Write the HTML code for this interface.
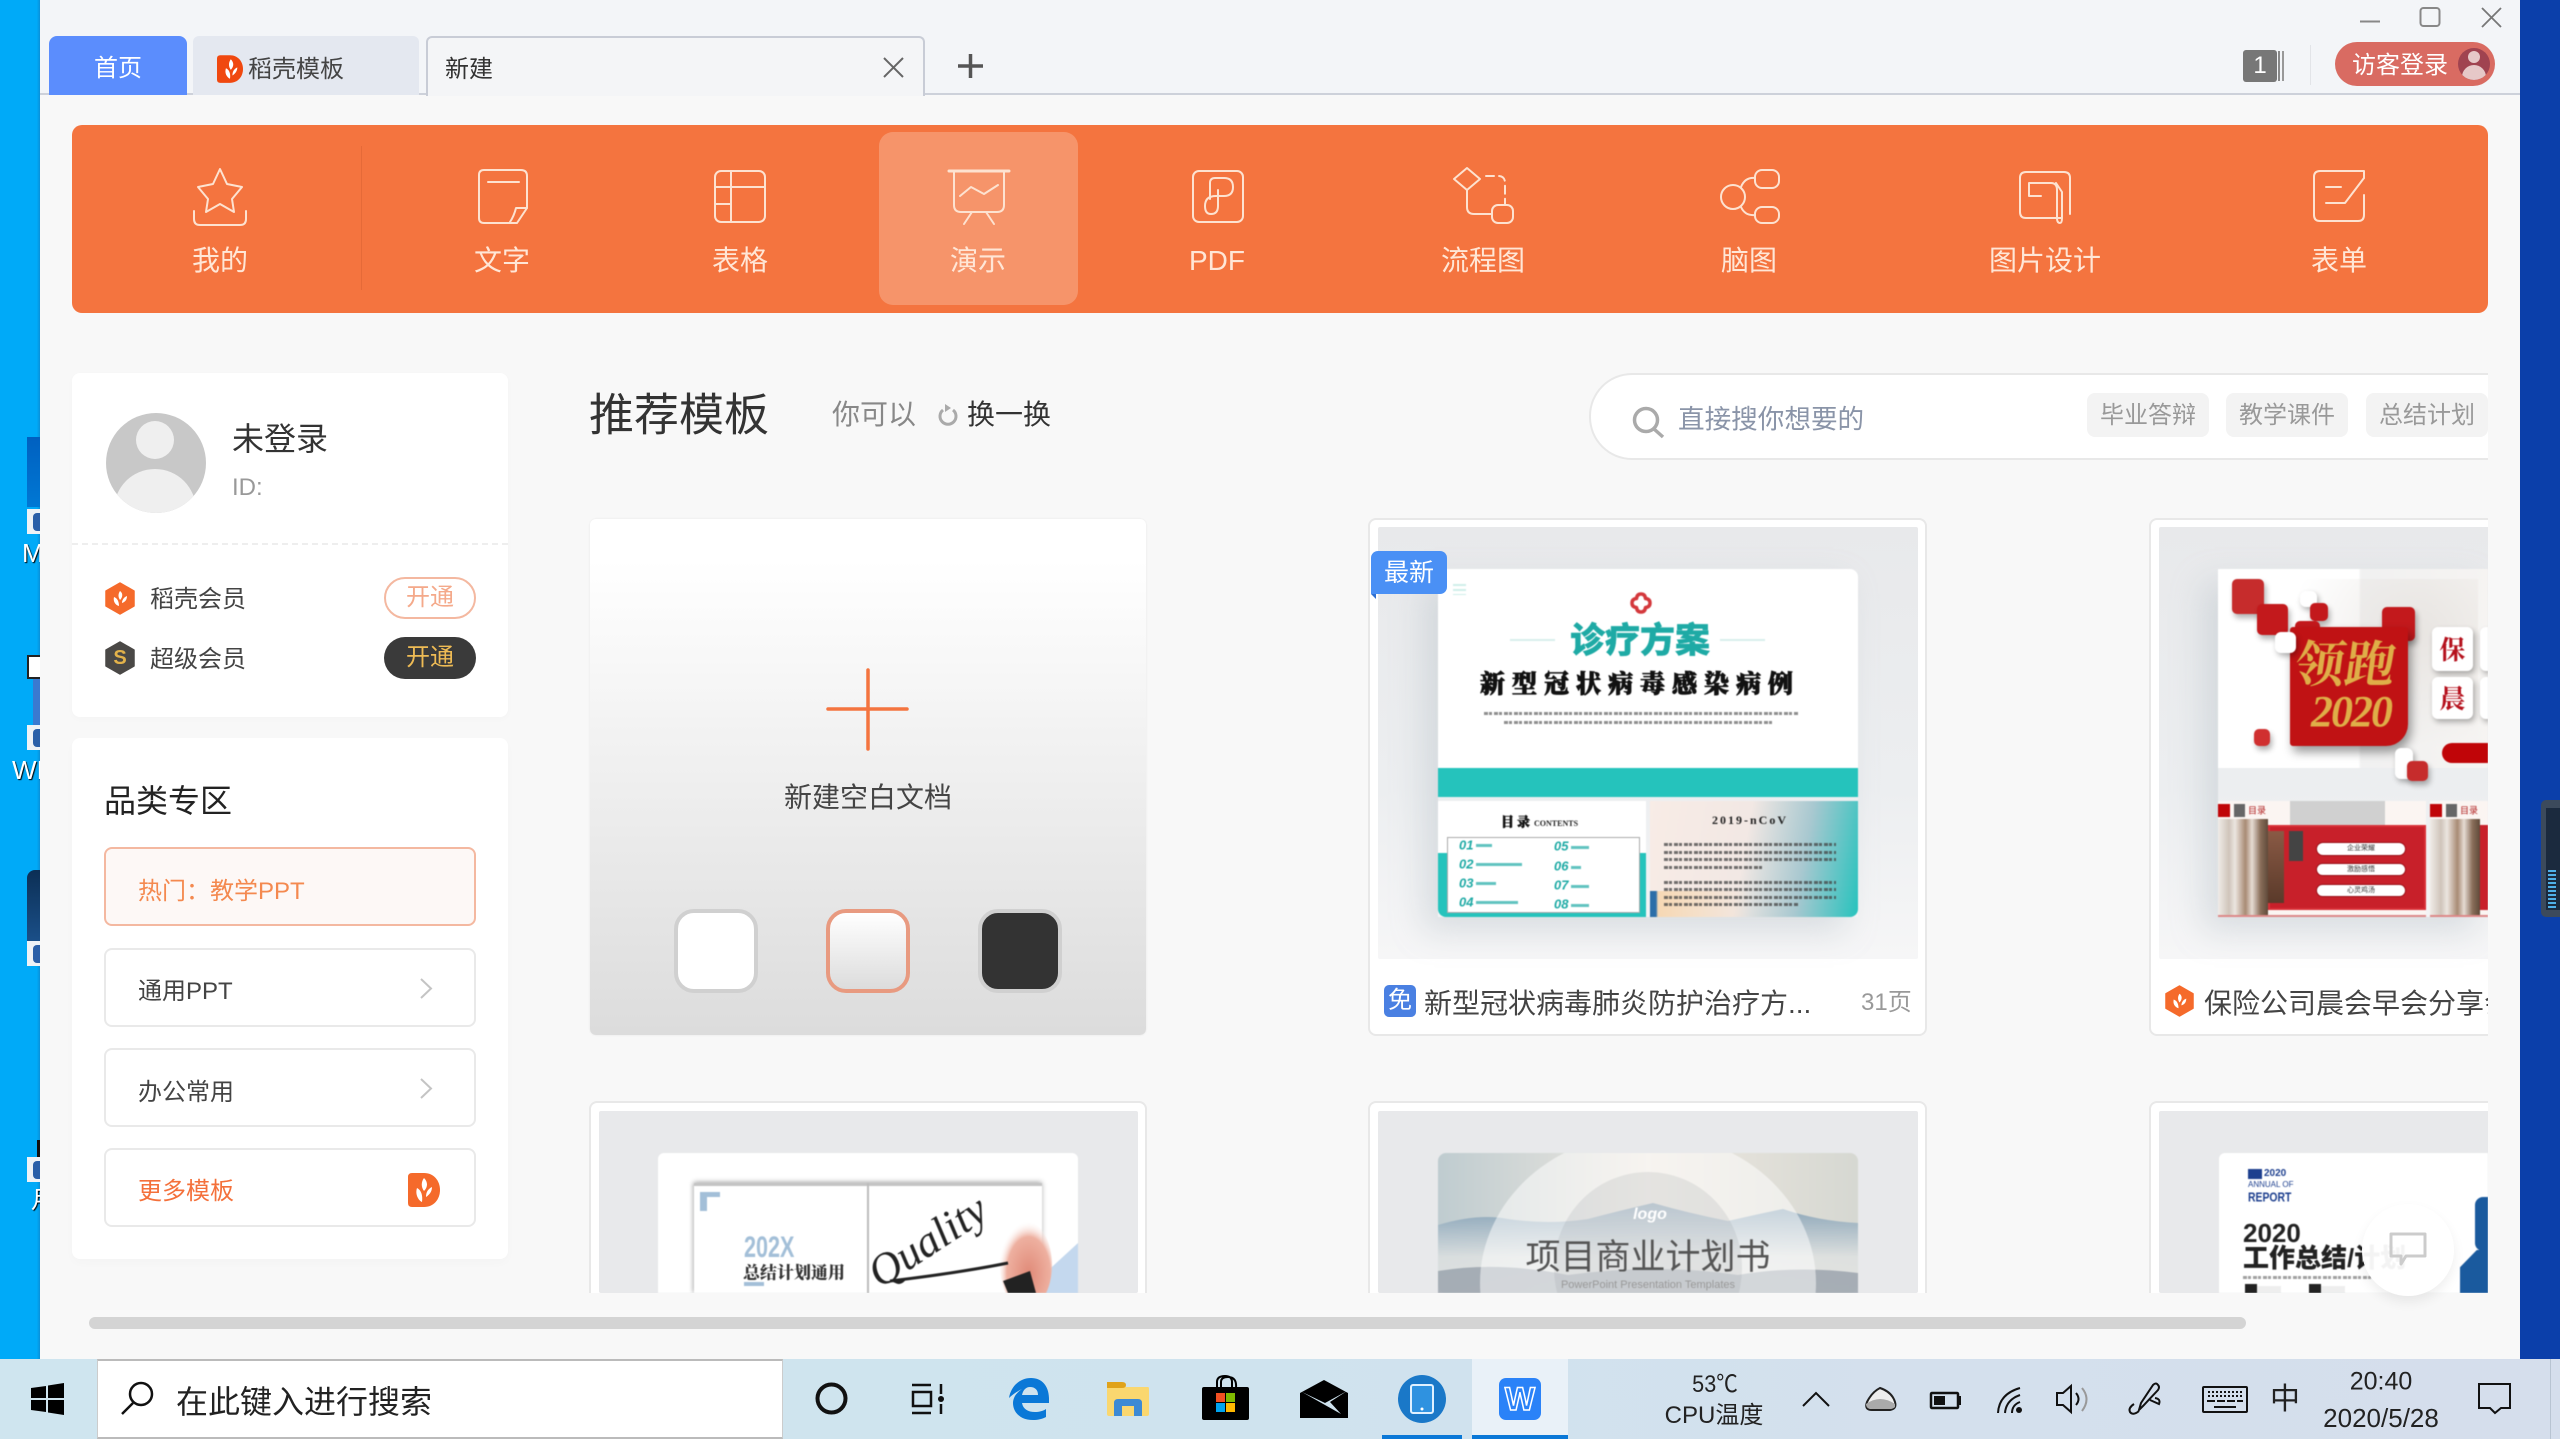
<!DOCTYPE html>
<html lang="zh"><head><meta charset="utf-8"><title>WPS</title>
<style>
*{margin:0;padding:0;box-sizing:border-box}
html,body{width:2560px;height:1439px;overflow:hidden;background:#0b3faa}
body{position:relative;font-family:"Liberation Sans","Noto Sans CJK SC",sans-serif;color:#333}
.a{position:absolute}
.t{position:absolute;white-space:nowrap;line-height:1;transform:translateY(-50%)}
.c{position:absolute;white-space:nowrap;line-height:1;transform:translate(-50%,-50%)}
.nav{font-size:28px;color:#ffe6d6;top:261px}
.box{position:absolute;left:104px;width:372px;height:79px;border:2px solid #e9e9e9;border-radius:8px;background:#fff}
.card{position:absolute;background:#fff;border:2px solid #e8e8e8;border-radius:8px;height:518px;width:559px}
.card.r2{height:192px;border-bottom:0;border-radius:8px 8px 0 0}
.inner{position:absolute;left:8px;top:7px;right:7px;height:432px;background:linear-gradient(#e8e9eb 0,#eceef0 60%,#f6f6f7 100%);border-radius:2px}
.r2 .inner{top:8px;height:182px;background:#e8e9eb}
.tag{position:absolute;top:33px;width:122px;height:44px;background:#f3f3f3;border-radius:8px;color:#999;font-size:24px;line-height:46px;text-align:center}
.red{position:absolute;background:#c3191c;border-radius:5px;box-shadow:2px 4px 6px rgba(0,0,0,.3)}
.wh{position:absolute;background:#fff;border-radius:6px;box-shadow:2px 3px 6px rgba(0,0,0,.3)}
.ln{position:absolute;height:3px;background:repeating-linear-gradient(90deg,#444 0 4px,transparent 4px 5px,#444 5px 8px,transparent 8px 10px)}
</style></head><body>

<!-- desktop left -->
<div class="a" style="left:0;top:0;width:40px;height:1439px;background:linear-gradient(90deg,#00aaf8 0,#00aaf8 92%,#0a8fd8 100%)"></div>
<div class="a" style="left:27px;top:437px;width:13px;height:70px;background:linear-gradient(#0060c0,#0078d4)"></div>
<div class="a" style="left:27px;top:509px;width:13px;height:25px;background:#eef2f6"></div>
<div class="a" style="left:33px;top:513px;width:7px;height:18px;background:#2a5fa8;border-radius:4px 0 0 4px"></div>
<div class="t" style="left:22px;top:553px;width:18px;overflow:hidden;font-size:26px;color:#fff;text-shadow:1px 1px 1px #000">M</div>
<div class="a" style="left:27px;top:655px;width:13px;height:24px;background:#fff;border:2px solid #222;border-right:0"></div>
<div class="a" style="left:33px;top:679px;width:7px;height:46px;background:#3a7ad0"></div>
<div class="a" style="left:27px;top:725px;width:13px;height:25px;background:#eef2f6"></div>
<div class="a" style="left:33px;top:729px;width:7px;height:18px;background:#2a5fa8;border-radius:4px 0 0 4px"></div>
<div class="t" style="left:12px;top:770px;width:28px;overflow:hidden;font-size:26px;color:#fff;text-shadow:1px 1px 1px #000">WI</div>
<div class="a" style="left:27px;top:870px;width:13px;height:71px;background:linear-gradient(#0c2f55,#1a4f88);border-radius:8px 0 0 0"></div>
<div class="a" style="left:27px;top:941px;width:13px;height:25px;background:#eef2f6"></div>
<div class="a" style="left:33px;top:945px;width:7px;height:18px;background:#2a5fa8;border-radius:4px 0 0 4px"></div>
<div class="a" style="left:37px;top:1140px;width:3px;height:17px;background:#111"></div>
<div class="a" style="left:27px;top:1157px;width:13px;height:25px;background:#eef2f6"></div>
<div class="a" style="left:33px;top:1161px;width:7px;height:18px;background:#2a5fa8;border-radius:4px 0 0 4px"></div>
<div class="t" style="left:31px;top:1201px;width:9px;overflow:hidden;font-size:24px;color:#fff;text-shadow:1px 1px 1px #000">月</div>

<!-- desktop right gadget -->
<div class="a" style="left:2541px;top:800px;width:19px;height:117px;background:#3c4a5c;border-radius:5px 0 0 5px"></div>
<div class="a" style="left:2546px;top:808px;width:14px;height:102px;background:#1b2a3e"></div>
<div class="a" style="left:2548px;top:870px;width:8px;height:38px;background:repeating-linear-gradient(#4fb0e8 0 2px,#1b2a3e 2px 4px)"></div>

<!-- window -->
<div class="a" style="left:40px;top:0;width:2480px;height:1359px;background:#f8f8f8"></div>
<div class="a" style="left:40px;top:0;width:2480px;height:95px;background:#f3f5f8;border-bottom:2px solid #cdd1da"></div>

<!-- tabs -->
<div class="a" style="left:49px;top:36px;width:138px;height:59px;background:#5b8dfd;border-radius:8px 8px 0 0"></div>
<div class="c" style="left:118px;top:69px;font-size:24px;color:#fff">首页</div>
<div class="a" style="left:193px;top:36px;width:226px;height:59px;background:#e4e8f0;border-radius:6px 6px 0 0"></div>
<svg class="a" style="left:217px;top:54px" width="26" height="30" viewBox="0 0 32 34"><path d="M4 0H16C26 0 32 8 32 17C32 26 26 34 16 34H4Q0 34 0 30V4Q0 0 4 0Z" fill="#f0480f"/><path d="M17 5C21 9 21 14 17 18C14 14 14 9 17 5ZM11 16C15 18 17 22 16 29C12 27 9 22 11 16ZM25 15C25 20 22 23 19 25C19 20 21 17 25 15Z" fill="#fff"/></svg>
<div class="t" style="left:248px;top:70px;font-size:24px;color:#444">稻壳模板</div>
<div class="a" style="left:426px;top:36px;width:499px;height:60px;background:#f4f5f7;border:2px solid #c8ccd6;border-bottom:0;border-radius:6px 6px 0 0"></div>
<div class="t" style="left:445px;top:70px;font-size:24px;color:#333">新建</div>

<!-- top right -->
<div class="a" style="left:2243px;top:50px;width:34px;height:32px;background:#777;border-radius:3px;color:#fff;font-size:24px;line-height:32px;text-align:center">1</div>
<div class="a" style="left:2278px;top:51px;width:1.5px;height:30px;background:#888"></div>
<div class="a" style="left:2282px;top:51px;width:1.5px;height:30px;background:#999"></div>
<div class="a" style="left:2310px;top:45px;width:1px;height:40px;background:#e2e4e8"></div>
<div class="a" style="left:2335px;top:42px;width:160px;height:44px;background:#d96b62;border-radius:22px"></div>
<div class="t" style="left:2352px;top:66px;font-size:24px;color:#fff">访客登录</div>
<div class="a" style="left:2458px;top:48px;width:32px;height:32px;background:#a04350;border-radius:50%;overflow:hidden">
  <div class="a" style="left:10px;top:3px;width:12px;height:12px;background:#e6c8c8;border-radius:50%"></div>
  <div class="a" style="left:4px;top:17px;width:24px;height:15px;background:#e6c8c8;border-radius:12px 12px 0 0"></div>
</div>

<!-- orange bar -->
<div class="a" style="left:72px;top:125px;width:2416px;height:188px;background:#f4743f;border-radius:10px"></div>
<div class="a" style="left:361px;top:146px;width:1px;height:144px;background:#e56a38"></div>
<div class="a" style="left:879px;top:132px;width:199px;height:173px;background:#f6946a;border-radius:14px"></div>
<div class="c nav" style="left:220px">我的</div>
<div class="c nav" style="left:502px">文字</div>
<div class="c nav" style="left:740px">表格</div>
<div class="c nav" style="left:978px">演示</div>
<div class="c nav" style="left:1217px">PDF</div>
<div class="c nav" style="left:1483px">流程图</div>
<div class="c nav" style="left:1749px">脑图</div>
<div class="c nav" style="left:2045px">图片设计</div>
<div class="c nav" style="left:2339px">表单</div>

<!-- page vector icons -->
<svg class="a" style="left:0;top:0;z-index:3;pointer-events:none" width="2560" height="1439" viewBox="0 0 2560 1439" fill="none">
 <!-- window ctrls -->
 <path d="M2360 21.5H2380" stroke="#888" stroke-width="2"/>
 <rect x="2420.5" y="8" width="19" height="18" rx="3" stroke="#888" stroke-width="2"/>
 <path d="M2482 8L2501 27M2501 8L2482 27" stroke="#777" stroke-width="1.8"/>
 <path d="M884 58L903 77M903 58L884 77" stroke="#666" stroke-width="2"/>
 <path d="M970.5 54V78M958 66H983" stroke="#555" stroke-width="3.5"/>
 <g stroke="#fde2d0" stroke-width="2" stroke-linejoin="round" stroke-linecap="round">
  <path d="M220 169L227 184L242 187L232 199L234 212L220 204L206 212L208 199L198 187L213 184Z"/>
  <path d="M194 211V219Q194 225 200 225H240Q246 225 246 219V211"/>
  <path d="M484 170H521Q527 170 527 176V208L517 223H484Q479 223 479 218V175Q479 170 484 170Z"/>
  <path d="M527 208H516Q514 216 510 222M488 182H519"/>
  <rect x="715" y="171" width="50" height="51" rx="6"/>
  <path d="M715 187H765M731 171V222M715 204H731"/>
  <path d="M949 171H1009" stroke-width="3"/>
  <path d="M954 171V205Q954 212 961 212H997Q1004 212 1004 205V171M972 212L964 224M986 212L994 224M960 196L971 187L984 194L998 185"/>
  <rect x="1193" y="171" width="50" height="51" rx="6"/>
  <path d="M1210 199V183Q1210 178 1215 178H1224Q1233 178 1233 187Q1233 196 1224 196H1216Q1205 196 1205 206Q1205 214 1211 214Q1218 214 1218 206V190"/>
  <path d="M1467 168L1480 179L1467 190L1454 179Z"/>
  <path d="M1486 176H1498Q1505 176 1505 183V205" stroke-dasharray="8 5"/>
  <path d="M1467 190V207Q1467 214 1474 214H1492"/>
  <rect x="1492" y="205" width="21" height="18" rx="6"/>
  <ellipse cx="1733" cy="197" rx="12" ry="12"/>
  <rect x="1755" y="170" width="24" height="18" rx="7"/>
  <rect x="1755" y="207" width="24" height="16" rx="7"/>
  <path d="M1741 187Q1745 177 1755 178M1741 207Q1745 216 1755 215"/>
  <path d="M2062 218H2026Q2020 218 2020 212V178Q2020 172 2026 172H2064Q2070 172 2070 178V214"/>
  <path d="M2041 196H2029V183H2051Q2057 183 2057 190V218Q2057 223 2060 223Q2062 223 2062 218V192L2056 183"/>
  <path d="M2364 178V171H2320Q2314 171 2314 177V215Q2314 221 2320 221H2358Q2364 221 2364 215V195"/>
  <path d="M2364 178L2345 203H2326M2326 187H2341"/>
 </g>
 <!-- refresh -->
 <path d="M943 410A8 8 0 1 0 953 410" stroke="#aaa" stroke-width="3"/><path d="M945 404L951 408L945 412Z" fill="#aaa"/>
 <!-- new plus -->
 <path d="M868 670V749M828 709H907" stroke="#f4743f" stroke-width="3.5" stroke-linecap="round"/>
 <!-- chevrons -->
 <path d="M421 979L431 988.5L421 998" stroke="#c4c4c4" stroke-width="2"/>
 <path d="M421 1079L431 1088.5L421 1098" stroke="#c4c4c4" stroke-width="2"/>
 <!-- more logo -->
 <g transform="translate(408 1173)"><path d="M4 0H16C26 0 32 8 32 17C32 26 26 34 16 34H4Q0 34 0 30V4Q0 0 4 0Z" fill="#f56a2b"/><path d="M16 5C20 9 20 14 16 18C13 14 13 9 16 5ZM9 15C13 17 15 22 14 29C10 27 7 21 9 15ZM24 14C24 19 21 22 18 24C18 19 20 16 24 14Z" fill="#fff"/></g>
 <!-- member hexes -->
 <g transform="translate(105 582)"><path d="M15 1L29 9V24L15 32L1 24V9Z" fill="#f56a2b" stroke="#f56a2b" stroke-width="1.5" stroke-linejoin="round"/><path d="M15 9C18 11 18 15 15 18C13 15 13 12 15 9ZM9 15C12 16 14 19 14 24C10 23 8 19 9 15ZM22 14C22 18 20 20 17 21C17 18 19 15 22 14Z" fill="#fff"/></g>
 <path d="M120 642L134 650V666L120 674L106 666V650Z" fill="#4a4846" stroke="#4a4846" stroke-width="1.5" stroke-linejoin="round"/>
 <!-- search magnifier main -->
 <circle cx="1646" cy="420" r="11.5" stroke="#aaa" stroke-width="3.5"/><path d="M1654 429L1663 437" stroke="#aaa" stroke-width="3.5"/>
</svg>
<div class="c" style="left:120px;top:658px;font-size:20px;font-weight:700;color:#e3b24a;z-index:4">S</div>

<!-- left profile card -->
<div class="a" style="left:72px;top:373px;width:436px;height:344px;background:#fff;border-radius:8px;box-shadow:0 2px 8px rgba(0,0,0,.02)"></div>
<div class="a" style="left:106px;top:413px;width:100px;height:100px;background:#c8c8c8;border-radius:50%;overflow:hidden">
 <div class="a" style="left:30px;top:8px;width:38px;height:38px;background:#efefef;border-radius:50%"></div>
 <div class="a" style="left:8px;top:56px;width:82px;height:44px;background:#efefef;border-radius:41px 41px 0 0"></div>
</div>
<div class="t" style="left:232px;top:439px;font-size:32px;color:#333">未登录</div>
<div class="t" style="left:232px;top:488px;font-size:24px;color:#999">ID:</div>
<div class="a" style="left:72px;top:543px;width:436px;border-top:2px dashed #eee"></div>
<div class="t" style="left:150px;top:600px;font-size:24px;color:#444">稻壳会员</div>
<div class="t" style="left:150px;top:660px;font-size:24px;color:#444">超级会员</div>
<div class="a" style="left:384px;top:577px;width:92px;height:42px;border:2px solid #f4b8a0;border-radius:21px;background:#fff;color:#f4a98a;font-size:24px;line-height:38px;text-align:center">开通</div>
<div class="a" style="left:384px;top:637px;width:92px;height:42px;border-radius:21px;background:#3a3a3a;color:#eebb55;font-size:24px;line-height:42px;text-align:center">开通</div>

<!-- left category card -->
<div class="a" style="left:72px;top:738px;width:436px;height:521px;background:#fff;border-radius:8px;box-shadow:0 4px 10px rgba(0,0,0,.02)"></div>
<div class="t" style="left:104px;top:801px;font-size:32px;color:#222">品类专区</div>
<div class="box" style="top:847px;border-color:#f4b8a0;background:#fdf8f6"></div>
<div class="t" style="left:138px;top:892px;font-size:24px;color:#f4894f">热门：教学PPT</div>
<div class="box" style="top:948px"></div>
<div class="t" style="left:138px;top:992px;font-size:24px;color:#444">通用PPT</div>
<div class="box" style="top:1048px"></div>
<div class="t" style="left:138px;top:1093px;font-size:24px;color:#444">办公常用</div>
<div class="box" style="top:1148px"></div>
<div class="t" style="left:138px;top:1192px;font-size:24px;color:#f4703a">更多模板</div>

<!-- main heading -->
<div class="t" style="left:589px;top:415px;font-size:45px;color:#333">推荐模板</div>
<div class="t" style="left:832px;top:415px;font-size:28px;color:#888">你可以</div>
<div class="t" style="left:967px;top:415px;font-size:28px;color:#333">换一换</div>

<!-- search -->
<div class="a" style="left:1589px;top:373px;width:899px;height:87px;overflow:hidden">
 <div class="a" style="left:0;top:0;width:899px;height:87px;background:#fff;border:2px solid #e8e8e8;border-right:0;border-radius:43px 0 0 43px"></div>
 <div class="t" style="left:89px;top:47px;font-size:26.6px;color:#8a94a8">直接搜你想要的</div>
 <div class="tag" style="left:498px;top:20px">毕业答辩</div>
 <div class="tag" style="left:637px;top:20px">教学课件</div>
 <div class="tag" style="left:777px;top:20px">总结计划</div>
</div>

<!-- scroll clip -->
<div class="a" style="left:560px;top:500px;width:1928px;height:793px;overflow:hidden">
 <!-- new blank -->
 <div class="a" style="left:30px;top:19px;width:556px;height:516px;border-radius:6px;background:linear-gradient(#fff 0,#fff 8%,#dcdcdc 100%);box-shadow:0 0 2px rgba(0,0,0,.08)"></div>
 <div class="c" style="left:308px;top:298px;font-size:28px;color:#444">新建空白文档</div>
 <div class="a" style="left:114px;top:409px;width:84px;height:84px;background:#fff;border:4px solid #d0d0d0;border-radius:20px"></div>
 <div class="a" style="left:266px;top:409px;width:84px;height:84px;background:linear-gradient(#fff,#dcdcdc);border:4px solid #e89a80;border-radius:20px"></div>
 <div class="a" style="left:418px;top:409px;width:84px;height:84px;background:#333;border:4px solid #d0d0d0;border-radius:20px"></div>

 <!-- card 2 -->
 <div class="card" style="left:808px;top:18px"><div class="inner"></div></div>
 <div class="a" style="left:878px;top:69px;width:420px;height:348px;filter:blur(.6px);box-shadow:-14px 14px 30px rgba(170,180,190,.35)">
  <div class="a" style="left:0;top:0;width:420px;height:199px;background:#fff;border-radius:8px 8px 0 0"></div>
  <div class="a" style="left:0;top:199px;width:420px;height:29px;background:#25c3bc"></div>
  <div class="a" style="left:15px;top:15px;width:13px;height:11px;background:repeating-linear-gradient(#cfeeea 0 2px,transparent 2px 5px)"></div>
  <svg class="a" style="left:192px;top:23px" width="22" height="22" viewBox="0 0 22 22" fill="none"><path d="M11 2Q15 2 15.500 6.500Q20 7 20 11Q20 15 15.500 15.500Q15 20 11 20Q7 20 6.500 15.500Q2 15 2 11Q2 7 6.500 6.500Q7 2 11 2Z" stroke="#d4383c" stroke-width="3.5" stroke-linejoin="round"/></svg>
  <div class="c" style="left:202px;top:72px;font-size:35px;font-weight:900;color:#1eaaa5;-webkit-text-stroke:.4px #1eaaa5">诊疗方案</div>
  <div class="a" style="left:72px;top:70px;width:45px;height:2px;background:#d8eeec"></div>
  <div class="a" style="left:282px;top:70px;width:45px;height:2px;background:#d8eeec"></div>
  <div class="c" style="left:202px;top:114px;font-size:25px;font-weight:900;color:#111;letter-spacing:7px;-webkit-text-stroke:.8px #111;font-family:'Noto Serif CJK SC',serif">新型冠状病毒感染病例</div>
  <div class="ln" style="left:46px;top:143px;width:314px;opacity:.6"></div>
  <div class="ln" style="left:66px;top:152px;width:270px;opacity:.6"></div>
  <!-- lower left -->
  <div class="a" style="left:0;top:232px;width:208px;height:116px;background:#fff;overflow:hidden;border-radius:0 0 0 8px">
   <div class="a" style="left:0;top:52px;width:208px;height:64px;background:#25c3bc"></div>
   <div class="a" style="left:9px;top:36px;width:193px;height:76px;background:#fff;border:1px solid #aaa"></div>
   <div class="t" style="left:63px;top:20px;font-size:13px;letter-spacing:3px;font-weight:900;color:#111;-webkit-text-stroke:.5px #111;font-family:'Noto Serif CJK SC',serif">目录</div>
   <div class="t" style="left:96px;top:23px;font-size:8px;font-weight:700;color:#222;font-family:'Liberation Serif',serif">CONTENTS</div>
   <div class="t" style="left:21px;top:44px;font-size:13px;font-weight:700;font-style:italic;color:#1eaaa5">01</div>
   <div class="t" style="left:21px;top:63px;font-size:13px;font-weight:700;font-style:italic;color:#1eaaa5">02</div>
   <div class="t" style="left:21px;top:82px;font-size:13px;font-weight:700;font-style:italic;color:#1eaaa5">03</div>
   <div class="t" style="left:21px;top:101px;font-size:13px;font-weight:700;font-style:italic;color:#1eaaa5">04</div>
   <div class="t" style="left:116px;top:45px;font-size:13px;font-weight:700;font-style:italic;color:#1eaaa5">05</div>
   <div class="t" style="left:116px;top:65px;font-size:13px;font-weight:700;font-style:italic;color:#1eaaa5">06</div>
   <div class="t" style="left:116px;top:84px;font-size:13px;font-weight:700;font-style:italic;color:#1eaaa5">07</div>
   <div class="t" style="left:116px;top:103px;font-size:13px;font-weight:700;font-style:italic;color:#1eaaa5">08</div>
   <div class="ln" style="left:38px;top:43px;width:16px;background:#1eaaa5;opacity:.7"></div>
   <div class="ln" style="left:38px;top:62px;width:46px;background:#1eaaa5;opacity:.7"></div>
   <div class="ln" style="left:38px;top:81px;width:20px;background:#1eaaa5;opacity:.7"></div>
   <div class="ln" style="left:38px;top:100px;width:42px;background:#1eaaa5;opacity:.7"></div>
   <div class="ln" style="left:133px;top:45px;width:18px;background:#1eaaa5;opacity:.7"></div>
   <div class="ln" style="left:133px;top:65px;width:10px;background:#1eaaa5;opacity:.7"></div>
   <div class="ln" style="left:133px;top:84px;width:18px;background:#1eaaa5;opacity:.7"></div>
   <div class="ln" style="left:133px;top:103px;width:18px;background:#1eaaa5;opacity:.7"></div>
  </div>
  <!-- lower right -->
  <div class="a" style="left:212px;top:232px;width:208px;height:116px;background:linear-gradient(100deg,#f8ece6 0,#f2e8e4 45%,#a8c8d0 72%,#27c3bd 100%);overflow:hidden;border-radius:0 0 8px 0">
   <div class="a" style="left:0;top:90px;width:100px;height:26px;background:linear-gradient(90deg,#2c6ea8 0,#2c6ea8 6%,#f6d8b4 8%,transparent 100%)"></div>
   <div class="c" style="left:100px;top:19px;font-size:12px;font-weight:900;color:#222;letter-spacing:2px;font-family:'Liberation Serif',serif">2019-nCoV</div>
   <div class="ln" style="left:14px;top:42px;width:172px;opacity:.75"></div>
   <div class="ln" style="left:14px;top:50px;width:172px;opacity:.75"></div>
   <div class="ln" style="left:14px;top:57px;width:172px;opacity:.75"></div>
   <div class="ln" style="left:14px;top:65px;width:100px;opacity:.75"></div>
   <div class="ln" style="left:14px;top:80px;width:172px;opacity:.75"></div>
   <div class="ln" style="left:14px;top:87px;width:172px;opacity:.75"></div>
   <div class="ln" style="left:14px;top:95px;width:172px;opacity:.75"></div>
   <div class="ln" style="left:14px;top:102px;width:135px;opacity:.75"></div>
  </div>
 </div>
 <!-- badge -->
 <div class="a" style="left:811px;top:51px;width:76px;height:43px;background:#4a90f5;border-radius:7px 7px 7px 0;color:#fff;font-size:25px;line-height:44px;text-align:center">最新</div>
 <div class="a" style="left:811px;top:94px;width:0;height:0;border-top:5px solid #2f6fd0;border-left:5px solid transparent"></div>
 <div class="a" style="left:824px;top:485px;width:32px;height:32px;background:#4a80e2;border-radius:5px;color:#fff;font-size:24px;line-height:32px;text-align:center">免</div>
 <div class="t" style="left:864px;top:504px;font-size:28px;color:#444">新型冠状病毒肺炎防护治疗方...</div>
 <div class="t" style="left:1301px;top:503px;font-size:24px;color:#999">31页</div>

 <!-- card 3 -->
 <div class="card" style="left:1589px;top:18px;width:360px"><div class="inner"></div></div>
 <div class="a" style="left:1658px;top:69px;width:270px;height:348px;filter:blur(.5px);box-shadow:-14px 14px 30px rgba(170,180,190,.35);overflow:hidden">
  <div class="a" style="left:0;top:0;width:270px;height:199px;background:linear-gradient(90deg,#fff 0,#fff 52%,#f1f1f1 53%,#f6f4f2 100%)"></div>
  <div class="a" style="left:60px;top:10px;width:200px;height:180px;background:radial-gradient(ellipse at 70% 30%,rgba(225,220,215,.6),transparent 65%)"></div>
  <div class="red" style="left:14px;top:10px;width:32px;height:35px;background:#c62c2c"></div>
  <div class="red" style="left:39px;top:35px;width:31px;height:31px"></div>
  <div class="wh" style="left:82px;top:22px;width:17px;height:16px"></div>
  <div class="red" style="left:92px;top:34px;width:18px;height:18px"></div>
  <div class="red" style="left:77px;top:52px;width:25px;height:14px"></div>
  <div class="red" style="left:164px;top:38px;width:33px;height:34px"></div>
  <div class="a" style="left:72px;top:58px;width:118px;height:119px;background:#c01214;border-radius:3px 3px 22px 3px;box-shadow:3px 6px 10px rgba(0,0,0,.4)"></div>
  <div class="wh" style="left:57px;top:63px;width:21px;height:21px"></div>
  <div class="c" style="left:128px;top:92px;font-size:50px;font-weight:700;color:#dfae48;font-family:'Noto Serif CJK SC',serif;transform:translate(-50%,-50%) skewX(-8deg)">领跑</div>
  <div class="c" style="left:133px;top:143px;font-size:44px;font-weight:700;font-style:italic;color:#dfae48;font-family:'Liberation Serif',serif;letter-spacing:-2px">2020</div>
  <div class="wh" style="left:214px;top:58px;width:41px;height:44px;color:#b5101c;font-size:26px;font-weight:700;line-height:44px;text-align:center;font-family:'Noto Serif CJK SC',serif">保</div>
  <div class="wh" style="left:214px;top:108px;width:41px;height:42px;color:#b5101c;font-size:26px;font-weight:700;line-height:42px;text-align:center;font-family:'Noto Serif CJK SC',serif">晨</div>
  <div class="wh" style="left:262px;top:58px;width:41px;height:44px"></div>
  <div class="wh" style="left:262px;top:108px;width:41px;height:42px"></div>
  <div class="red" style="left:36px;top:160px;width:16px;height:17px;background:#d03030"></div>
  <div class="wh" style="left:177px;top:179px;width:18px;height:31px"></div>
  <div class="red" style="left:189px;top:192px;width:21px;height:20px;background:#c62c2c"></div>
  <div class="a" style="left:224px;top:174px;width:80px;height:20px;background:#c00508;border-radius:10px"></div>
  <!-- lower -->
  <div class="a" style="left:0;top:232px;width:208px;height:116px;background:#fbf5f2;overflow:hidden;border-bottom:2px solid #d88">
   <div class="a" style="left:72px;top:0;width:95px;height:24px;background:#d0d0d0"></div>
   <div class="a" style="left:0;top:3px;width:12px;height:13px;background:#c00508"></div>
   <div class="a" style="left:16px;top:3px;width:11px;height:13px;background:#666"></div>
   <div class="t" style="left:30px;top:10px;font-size:9px;color:#b02020">目录</div>
   <div class="a" style="left:0;top:18px;width:50px;height:98px;background:linear-gradient(90deg,#f0ece8 0,#cfc4ba 22%,#ece6e0 34%,#a88a74 55%,#e6dcd4 68%,#8a6e5a 85%,#5f4a3a 100%)"></div>
   <div class="a" style="left:50px;top:24px;width:158px;height:85px;background:#c8202a;border:2px solid #d83038"></div>
   <div class="a" style="left:50px;top:30px;width:16px;height:72px;background:linear-gradient(#8a5a45,#5a3a2a)"></div>
   <div class="a" style="left:71px;top:30px;width:14px;height:30px;background:#444"></div>
   <div class="a" style="left:99px;top:42px;width:88px;height:12px;background:#fff;border-radius:6px;box-shadow:0 0 0 1px #9a1018;font-size:7px;line-height:12px;text-align:center;color:#333">企业荣耀</div>
   <div class="a" style="left:99px;top:63px;width:88px;height:11px;background:#fff;border-radius:6px;box-shadow:0 0 0 1px #9a1018;font-size:7px;line-height:11px;text-align:center;color:#333">激励感悟</div>
   <div class="a" style="left:99px;top:84px;width:88px;height:11px;background:#fff;border-radius:6px;box-shadow:0 0 0 1px #9a1018;font-size:7px;line-height:11px;text-align:center;color:#333">心灵鸡汤</div>
  </div>
  <div class="a" style="left:212px;top:232px;width:58px;height:116px;background:#fbf5f2;overflow:hidden;border-bottom:2px solid #d88">
   <div class="a" style="left:0;top:3px;width:12px;height:13px;background:#c00508"></div>
   <div class="a" style="left:16px;top:3px;width:11px;height:13px;background:#666"></div>
   <div class="t" style="left:30px;top:10px;font-size:9px;color:#b02020">目录</div>
   <div class="a" style="left:0;top:18px;width:50px;height:98px;background:linear-gradient(90deg,#f0ece8 0,#cfc4ba 22%,#ece6e0 34%,#a88a74 55%,#e6dcd4 68%,#8a6e5a 85%,#5f4a3a 100%)"></div>
   <div class="a" style="left:50px;top:24px;width:8px;height:85px;background:#c8202a"></div>
  </div>
 </div>
 <svg class="a" style="left:1605px;top:485px" width="29" height="32" viewBox="0 0 30 33"><path d="M15 1L29 9V24L15 32L1 24V9Z" fill="#f56a2b" stroke="#f56a2b" stroke-width="1.5" stroke-linejoin="round"/><path d="M15 9C18 11 18 15 15 18C13 15 13 12 15 9ZM9 15C12 16 14 19 14 24C10 23 8 19 9 15ZM22 14C22 18 20 20 17 21C17 18 19 15 22 14Z" fill="#fff"/></svg>
 <div class="a" style="left:1644px;top:485px;width:284px;height:36px;overflow:hidden"><div class="t" style="left:0;top:19px;font-size:28px;color:#444">保险公司晨会早会分享会</div></div>

 <!-- row 2 left -->
 <div class="card r2" style="left:29px;top:601px;width:558px"><div class="inner"></div></div>
 <div class="a" style="left:98px;top:653px;width:420px;height:140px;background:#fff;border-radius:6px 6px 0 0;overflow:hidden;filter:blur(.5px)">
  <div class="a" style="left:36px;top:30px;width:348px;height:110px;background:#fff;box-shadow:0 -1px 5px rgba(0,0,0,.3),-2px 0 4px rgba(0,0,0,.1)"></div>
  <div class="a" style="left:36px;top:30px;width:348px;height:3px;background:#c4c4c4"></div>
  <div class="a" style="left:209px;top:30px;width:2px;height:110px;background:#bbb"></div>
  <div class="a" style="left:42px;top:39px;width:20px;height:5px;background:#a3bfd8"></div>
  <div class="a" style="left:42px;top:39px;width:7px;height:19px;background:#a3bfd8"></div>
  <div class="t" style="left:86px;top:95px;font-size:30px;font-weight:700;color:#a3bfd8;transform:translateY(-50%) scaleX(.72);transform-origin:left center">202X</div>
  <div class="t" style="left:85px;top:118px;font-size:17px;font-weight:900;color:#333;font-family:'Noto Serif CJK SC',serif">总结计划通用</div>
  <div class="a" style="left:86px;top:129px;width:20px;height:4px;background:#a3bfd8"></div>
  <svg class="a" style="left:0;top:0" width="420" height="140" viewBox="0 0 420 140"><defs><radialGradient id="h" cx=".55" cy=".6" r=".6"><stop offset="0" stop-color="#e08a78"/><stop offset=".7" stop-color="#eeb0a0"/><stop offset="1" stop-color="#fff" stop-opacity="0"/></radialGradient></defs><path d="M383 124L420 90V140H383Z" fill="#c4d8ee"/><ellipse cx="368" cy="112" rx="26" ry="44" fill="url(#h)"/><path d="M345 128L372 118L378 140H350Z" fill="#222"/><path d="M232 128Q300 120 350 110" stroke="#222" stroke-width="3" fill="none"/><text x="222" y="136" transform="rotate(-33 222 136)" font-family="Liberation Serif,serif" font-style="italic" font-size="44" fill="#222">Quality</text></svg>
 </div>

 <!-- row 2 mid -->
 <div class="card r2" style="left:808px;top:601px"><div class="inner"></div></div>
 <svg class="a" style="left:878px;top:653px;filter:blur(.5px)" width="420" height="140" viewBox="0 0 420 140">
  <defs><linearGradient id="m" x1="0" y1="0" x2="1" y2="0"><stop offset="0" stop-color="#bfccd0"/><stop offset=".5" stop-color="#eee8e0"/><stop offset="1" stop-color="#d6d8d2"/></linearGradient><linearGradient id="n" x1="0" y1="0" x2="0" y2="1"><stop offset="0" stop-color="#6f92ad"/><stop offset=".6" stop-color="#dfe2e2"/><stop offset="1" stop-color="#e6e6e4"/></linearGradient></defs>
  <rect width="420" height="140" rx="8" fill="url(#m)"/>
  <path d="M0 72Q40 60 70 66Q110 72 150 66Q180 58 215 50Q250 60 290 68Q325 60 345 56Q380 68 420 70V140H0Z" fill="url(#n)" opacity=".8"/>
  <path d="M0 118Q60 108 130 122Q220 110 300 122Q360 112 420 120V140H0Z" fill="#8d97a3" opacity=".7"/>
  <ellipse cx="210" cy="130" rx="168" ry="150" fill="#fff" opacity=".5"/>
  <ellipse cx="210" cy="115" rx="94" ry="96" fill="#8a9094" opacity=".16"/>
  <text x="212" y="66" font-family="Liberation Sans,sans-serif" font-size="16" fill="#fff" text-anchor="middle" font-style="italic" font-weight="700">logo</text>
  <text x="210" y="116" font-family="Noto Sans CJK SC,sans-serif" font-size="35" fill="#555" text-anchor="middle">项目商业计划书</text>
  <text x="210" y="135" font-family="Liberation Sans,sans-serif" font-size="11" fill="#999" text-anchor="middle">PowerPoint Presentation Templates</text>
 </svg>

 <!-- row 2 right -->
 <div class="card r2" style="left:1589px;top:601px;width:360px"><div class="inner"></div></div>
 <div class="a" style="left:1659px;top:653px;width:269px;height:140px;background:#fff;border-radius:6px 0 0 0;overflow:hidden;filter:blur(.4px)">
  <div class="a" style="left:29px;top:16px;width:14px;height:10px;background:#1d3f8e"></div>
  <div class="t" style="left:45px;top:21px;font-size:10px;color:#1d3f8e;font-weight:700">2020</div>
  <div class="t" style="left:29px;top:32px;font-size:8px;color:#1d3f8e">ANNUAL OF</div>
  <div class="t" style="left:29px;top:44px;font-size:13px;color:#1d3f8e;font-weight:700;transform:translateY(-50%) scaleX(.8);transform-origin:left center">REPORT</div>
  <div class="t" style="left:24px;top:80px;font-size:26px;font-weight:700;color:#222">2020</div>
  <div class="t" style="left:24px;top:105px;font-size:26px;font-weight:900;color:#222">工作总结/计划</div>
  <div class="ln" style="left:24px;top:123px;width:130px;opacity:.5"></div>
  <div class="a" style="left:26px;top:131px;width:12px;height:9px;background:#222"></div>
  <div class="a" style="left:38px;top:133px;width:24px;height:7px;background:#eee"></div>
  <div class="a" style="left:90px;top:131px;width:12px;height:9px;background:#222"></div>
  <div class="a" style="left:102px;top:133px;width:24px;height:7px;background:#eee"></div>
  <div class="a" style="left:241px;top:97px;width:28px;height:43px;background:#1a5a9e;clip-path:polygon(60% 0,100% 0,100% 100%,0 100%,0 40%)"></div>
  <div class="a" style="left:256px;top:44px;width:13px;height:54px;background:#1a5a9e;border-radius:8px 0 0 8px"></div>
 </div>
</div>

<!-- float chat -->
<div class="a" style="left:2362px;top:1204px;width:92px;height:92px;background:rgba(255,255,255,.95);border-radius:50%;box-shadow:0 6px 12px rgba(0,0,0,.07);z-index:4"></div>
<svg class="a" style="left:2388px;top:1231px;z-index:5" width="40" height="36" viewBox="0 0 40 36" fill="none"><path d="M3 3H37V25H18L13 33V25H3Z" stroke="#ccc" stroke-width="3" stroke-linejoin="round"/></svg>

<!-- scrollbar -->
<div class="a" style="left:89px;top:1317px;width:2157px;height:12px;background:#d4d4d4;border-radius:6px"></div>

<!-- taskbar -->
<div class="a" style="left:0;top:1359px;width:2560px;height:80px;background:linear-gradient(90deg,#cfe5ef 0,#cfe3ee 50%,#d4e0ed 75%,#d5deec 100%)"></div>
<div class="a" style="left:97px;top:1359px;width:686px;height:80px;background:#fff;border-top:2px solid #bbb;border-bottom:2px solid #bbb;border-left:1px solid #ccc;border-right:1px solid #ccc"></div>
<div class="t" style="left:176px;top:1402px;font-size:32px;color:#222">在此键入进行搜索</div>
<div class="a" style="left:1472px;top:1359px;width:96px;height:80px;background:#e9f1f8"></div>
<div class="a" style="left:1382px;top:1435px;width:80px;height:4px;background:#0a78d7"></div>
<div class="a" style="left:1472px;top:1435px;width:96px;height:4px;background:#0a78d7"></div>
<div class="a" style="left:2550px;top:1359px;width:1px;height:80px;background:#b8c4d2"></div>

<svg class="a" style="left:0;top:0;z-index:6;pointer-events:none" width="2560" height="1439" viewBox="0 0 2560 1439" fill="none">
 <!-- windows -->
 <path d="M31 1388L46 1386V1398H31ZM48 1385.5L64 1383V1398H48ZM31 1400H46V1412L31 1410ZM48 1400H64V1415L48 1412.5Z" fill="#000"/>
 <!-- search -->
 <circle cx="141" cy="1394" r="11" stroke="#111" stroke-width="2.5"/><path d="M133 1403L122 1414" stroke="#111" stroke-width="2.5"/>
 <!-- cortana -->
 <circle cx="831.5" cy="1398.5" r="14" stroke="#111" stroke-width="4"/>
 <!-- task view -->
 <path d="M912 1385H931M912 1413H931M941 1384V1394M941 1404V1414" stroke="#111" stroke-width="2.5"/><rect x="913" y="1392" width="18" height="14" stroke="#111" stroke-width="2.5"/><circle cx="941" cy="1399" r="3" fill="#111"/>
 <!-- edge -->
 <g transform="translate(1008 1378)"><path d="M1 20C3 8 12 0 23 0C34 0 41 8 41 21V25H14C15 31 20 34 27 34C31 34 35 33 38 31V39C34 41 30 42 25 42C12 42 5 34 5 25C5 20 8 15 14 11C10 13 5 16 1 20Z" fill="#0a78d7"/><path d="M14 17H30C30 12 27 9 22 9C18 9 15 12 14 17Z" fill="#cfe3ee"/></g>
 <!-- folder -->
 <path d="M1107 1389Q1107 1387 1109 1387H1148Q1149 1387 1149 1389V1414Q1149 1416 1147 1416H1109Q1107 1416 1107 1414Z" fill="#fad76f"/>
 <path d="M1107 1382H1122Q1126 1382 1126 1385Q1126 1388 1122 1388H1107Z" fill="#e0a21a"/>
 <path d="M1114 1416V1403Q1114 1399 1118 1399H1138Q1142 1399 1142 1403V1416H1134V1406H1122V1416Z" fill="#3d8ad4"/>
 <!-- store -->
 <rect x="1202" y="1387" width="47" height="33" rx="2" fill="#000"/>
 <path d="M1217 1388V1382Q1217 1376 1225 1376Q1232 1376 1232 1382V1388M1221 1388V1382Q1221 1377 1228 1377Q1237 1377 1236 1388" stroke="#000" stroke-width="2"/>
 <rect x="1216" y="1393" width="9" height="9" fill="#f25022"/><rect x="1226" y="1393" width="9" height="9" fill="#7fba00"/><rect x="1216" y="1403" width="9" height="9" fill="#00a4ef"/><rect x="1226" y="1403" width="9" height="9" fill="#ffb900"/>
 <!-- mail -->
 <path d="M1324 1380L1348 1393V1418H1300V1393Z" fill="#000"/>
 <path d="M1302 1392L1325 1403L1347 1391L1330 1402L1341 1414L1325 1405Z" fill="#cfe3ee"/>
 <!-- phone -->
 <circle cx="1422" cy="1399" r="24" fill="#1a78c8"/>
 <rect x="1411" y="1385" width="22" height="28" rx="2" fill="#2f92e0" stroke="#dff0ff" stroke-width="2"/><circle cx="1422" cy="1409" r="1.5" fill="#fff"/>
 <!-- wps -->
 <rect x="1499" y="1378" width="42" height="42" rx="7" fill="#2a82f8"/>
 <!-- tray -->
 <path d="M1803 1406L1816 1393L1829 1406" stroke="#111" stroke-width="2"/>
 <path d="M1880 1388Q1872 1392 1867 1402Q1864 1410 1872 1410H1890Q1897 1409 1895 1402Q1892 1392 1880 1388Z" fill="#eee" stroke="#222" stroke-width="2"/><path d="M1866 1404Q1880 1394 1895 1404V1407Q1893 1409 1890 1409H1872Q1866 1409 1866 1404Z" fill="#aaa"/>
 <rect x="1931" y="1393" width="27" height="15" rx="1" stroke="#111" stroke-width="2.5"/><rect x="1934" y="1396" width="11" height="9" fill="#111"/><path d="M1958 1397H1960V1404H1958" stroke="#111" stroke-width="2"/>
 <path d="M1998 1413Q1999 1394 2020 1388M2005 1413Q2006 1400 2020 1395M2012 1413Q2012 1405 2020 1402" stroke="#111" stroke-width="2"/><circle cx="2019" cy="1410" r="3" fill="#111"/>
 <path d="M2057 1393H2063L2071 1386V1412L2063 1405H2057Z" stroke="#111" stroke-width="2"/><path d="M2076 1393Q2081 1399 2076 1405" stroke="#111" stroke-width="2"/><path d="M2082 1388Q2091 1399 2082 1411" stroke="#999" stroke-width="2"/>
 <path d="M2143 1406L2139 1410L2141 1403L2153 1385Q2156 1382 2158 1385Q2160 1387 2158 1390ZM2155 1398Q2161 1399 2159 1404L2150 1400" stroke="#111" stroke-width="2"/><path d="M2134 1404Q2128 1408 2130 1412Q2133 1416 2139 1411" stroke="#111" stroke-width="2"/>
 <rect x="2203" y="1387" width="44" height="25" rx="1" stroke="#111" stroke-width="2"/><path d="M2208 1392H2242M2208 1396H2242" stroke="#111" stroke-width="2" stroke-dasharray="2 2"/><path d="M2207 1401H2243" stroke="#111" stroke-width="2" stroke-dasharray="8 2"/><path d="M2214 1407H2236" stroke="#111" stroke-width="2"/>
 <path d="M2479 1384H2510V1408H2501L2495 1413L2490 1408H2479Z" stroke="#111" stroke-width="2"/>
</svg>
<div class="c" style="left:1520px;top:1399px;font-size:32px;font-weight:700;color:#2a82f8;-webkit-text-stroke:1.5px #fff;z-index:7">W</div>
<div class="c" style="left:1715px;top:1385px;font-size:24px;color:#222;transform:translate(-50%,-50%) scaleX(.9)">53℃</div>
<div class="c" style="left:1714px;top:1416px;font-size:24px;color:#222">CPU温度</div>
<div class="c" style="left:2285px;top:1400px;font-size:30px;color:#222">中</div>
<div class="c" style="left:2381px;top:1382px;font-size:25px;color:#222">20:40</div>
<div class="c" style="left:2381px;top:1418px;font-size:26px;color:#222">2020/5/28</div>
</body></html>
